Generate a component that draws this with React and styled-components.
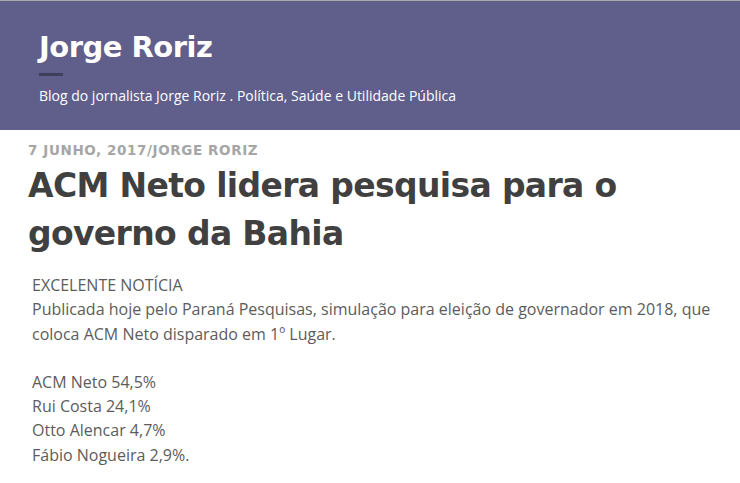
import React from 'react'
import styled, { createGlobalStyle } from 'styled-components';

const GlobalStyle = createGlobalStyle`
  body {
    margin: 0;
    background: #ffffff;
  }
`;

const Header = styled.header`
  box-sizing: border-box;
  height: 130px;
  border-top: 1px solid #a9a9a9;
  background-color: #605e8a;
  padding: 29px 39px 0;
`;

const SiteTitle = styled.h1`
  margin: 0;
  font-family: "DejaVu Sans", sans-serif;
  font-weight: bold;
  font-size: 29px;
  line-height: 34px;
  color: #ffffff;
  letter-spacing: -0.5px;
`;

const Bar = styled.div`
  width: 24px;
  height: 3px;
  margin: 9px 0 0;
  background-color: #3f3e5c;
`;

const Tagline = styled.p`
  margin: 10px 0 0;
  font-family: "Open Sans", sans-serif;
  font-size: 14px;
  color: #ffffff;
`;

const Article = styled.article`
  padding: 12px 28px 0;
`;

const Meta = styled.div`
  font-family: "DejaVu Sans", sans-serif;
  font-weight: bold;
  font-size: 13.5px;
  line-height: 16px;
  letter-spacing: 0.6px;
  color: #a6a6a6;
  text-transform: uppercase;
`;

const Title = styled.h2`
  margin: 4px 0 0;
  font-family: "DejaVu Sans", sans-serif;
  font-weight: bold;
  font-size: 33px;
  line-height: 48px;
  color: #404040;
  letter-spacing: -0.65px;
`;

const Body = styled.div`
  margin: 15px 0 0 4px;
  font-family: "Open Sans", sans-serif;
  font-size: 16px;
  line-height: 24.3px;
  color: #5c5c5c;
  p {
    margin: 0 0 24px;
  }
`;

const App = () => {
    return (
        <>
            <GlobalStyle />
            <Header>
                <SiteTitle>Jorge Roriz</SiteTitle>
                <Bar />
                <Tagline>Blog do jornalista Jorge Roriz . Política, Saúde e Utilidade Pública</Tagline>
            </Header>
            <Article>
                <Meta>7 Junho, 2017/Jorge Roriz</Meta>
                <Title>ACM Neto lidera pesquisa para o governo da Bahia</Title>
                <Body>
                    <p>
                        EXCELENTE NOTÍCIA
                        <br />
                        Publicada hoje pelo Paraná Pesquisas, simulação para eleição de governador em 2018, que coloca ACM Neto disparado em 1º Lugar.
                    </p>
                    <p>
                        ACM Neto 54,5%<br />
                        Rui Costa 24,1%<br />
                        Otto Alencar 4,7%<br />
                        Fábio Nogueira 2,9%.
                    </p>
                </Body>
            </Article>
        </>
    )
}

export default App
